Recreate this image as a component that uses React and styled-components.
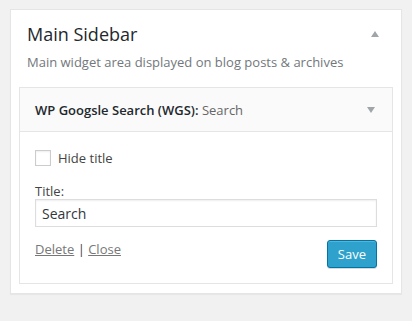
import React from "react";
import styled, { createGlobalStyle } from "styled-components";

const Global = createGlobalStyle`
  body {
    margin: 0;
    background: #f1f1f1;
    font-family: "Open Sans", "Liberation Sans", sans-serif;
    color: #444;
  }
`;

const Page = styled.div`
  padding: 9px 10px 28px 10px;
`;

const Sidebar = styled.div`
  width: 392px;
  box-sizing: border-box;
  background: #fff;
  border: 1px solid #e5e5e5;
  box-shadow: 0 1px 1px rgba(0, 0, 0, 0.04);
  padding-bottom: 9px;
`;

const SidebarHead = styled.div`
  display: flex;
  justify-content: space-between;
  align-items: center;
  padding: 9px 22px 0 16px;
`;

const Title = styled.h2`
  margin: 0;
  font-size: 18px;
  font-weight: 400;
  line-height: 30px;
  color: #23282d;
`;

const Arrow = styled.span`
  width: 0;
  height: 0;
  border-left: 4px solid transparent;
  border-right: 4px solid transparent;
  border-${(p) => (p.$up ? "bottom" : "top")}: 6px solid #a0a5aa;
`;

const Description = styled.p`
  margin: 2px 0 14px 16px;
  font-size: 13px;
  line-height: 22px;
  color: #72777c;
`;

const Widget = styled.div`
  margin: 0 8px 0 8px;
  border: 1px solid #e5e5e5;
  background: #fff;
`;

const WidgetTop = styled.div`
  display: flex;
  justify-content: space-between;
  align-items: center;
  height: 43px;
  padding: 0 17px 0 15px;
  background: #fafafa;
  border-bottom: 1px solid #e5e5e5;
`;

const WidgetTitle = styled.h3`
  margin: 0;
  font-size: 13px;
  font-weight: 600;
  color: #23282d;
`;

const InTitle = styled.span`
  font-weight: 400;
  color: #666;
`;

const WidgetBody = styled.div`
  padding: 17px 15px 15px 15px;
`;

const CheckRow = styled.label`
  display: flex;
  align-items: center;
  gap: 7px;
  font-size: 13px;
  color: #444;
  line-height: 18px;
`;

const Box = styled.span`
  width: 16px;
  height: 16px;
  box-sizing: border-box;
  border: 1px solid #ccc;
  box-shadow: inset 0 1px 2px rgba(0, 0, 0, 0.07);
  background: #fff;
`;

const Field = styled.div`
  margin-top: 17px;
  display: flex;
  flex-direction: column;
`;

const Label = styled.label`
  font-size: 13px;
  line-height: 15px;
  color: #444;
`;

const Input = styled.input`
  box-sizing: border-box;
  width: 100%;
  height: 28px;
  border: 1px solid #ddd;
  box-shadow: inset 0 1px 2px rgba(0, 0, 0, 0.07);
  padding: 0 6px;
  font-family: inherit;
  font-size: 14px;
  color: #32373c;
  outline: none;
`;

const Actions = styled.div`
  display: flex;
  justify-content: space-between;
  align-items: flex-start;
  margin-top: 13px;
`;

const Links = styled.div`
  font-size: 13px;
  color: #444;
  line-height: 16px;
  margin-top: 1px;
`;

const Link = styled.a`
  color: #777;
  text-decoration: underline;
`;

const SaveButton = styled.button`
  height: 28px;
  padding: 0 10px;
  font-family: inherit;
  font-size: 13px;
  color: #fff;
  background: #2ea2cc;
  border: 1px solid #0074a2;
  border-radius: 3px;
  box-shadow: inset 0 1px 0 rgba(120, 200, 230, 0.5), 0 1px 0 rgba(0, 0, 0, 0.15);
`;

export default function App() {
  return (
    <Page>
      <Global />
      <Sidebar>
        <SidebarHead>
          <Title>Main Sidebar</Title>
          <Arrow $up />
        </SidebarHead>
        <Description>Main widget area displayed on blog posts &amp; archives</Description>
        <Widget>
          <WidgetTop>
            <WidgetTitle>
              WP Googsle Search (WGS):<InTitle> Search</InTitle>
            </WidgetTitle>
            <Arrow />
          </WidgetTop>
          <WidgetBody>
            <CheckRow>
              <Box />
              Hide title
            </CheckRow>
            <Field>
              <Label>Title:</Label>
              <Input defaultValue="Search" />
            </Field>
            <Actions>
              <Links>
                <Link>Delete</Link> | <Link>Close</Link>
              </Links>
              <SaveButton>Save</SaveButton>
            </Actions>
          </WidgetBody>
        </Widget>
      </Sidebar>
    </Page>
  );
}
